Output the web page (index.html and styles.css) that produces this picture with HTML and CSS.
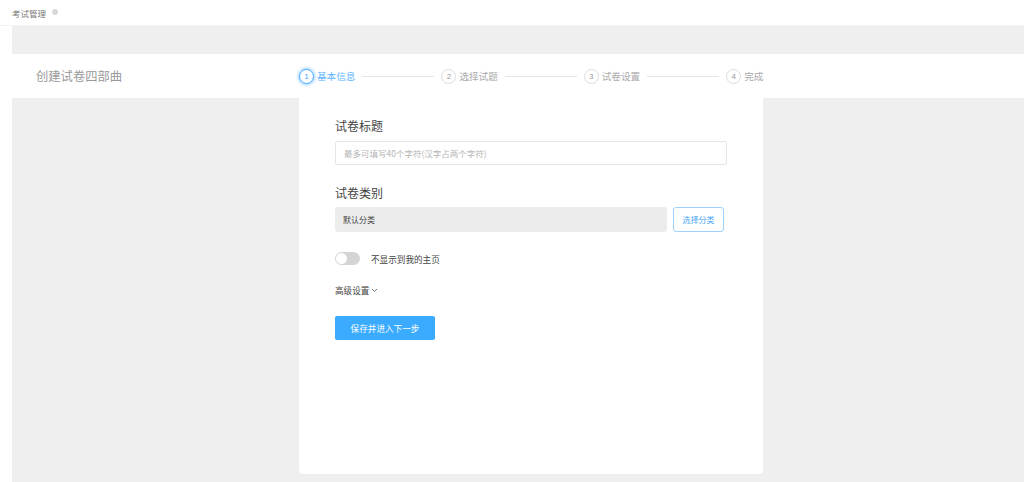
FILE: index.html
```html
<!DOCTYPE html>
<html lang="zh">
<head>
<meta charset="utf-8">
<link rel="stylesheet" href="styles.css">
</head>
<body>
<div class="topbar"><span class="crumb">考试管理</span><span class="dot"></span></div>
<div class="main">
  <div class="band"></div>
  <div class="header">
    <div class="page-title">创建试卷四部曲</div>
    <div class="steps">
      <div class="step active"><span class="num">1</span><span class="label">基本信息</span></div>
      <div class="line"></div>
      <div class="step"><span class="num">2</span><span class="label">选择试题</span></div>
      <div class="line"></div>
      <div class="step"><span class="num">3</span><span class="label">试卷设置</span></div>
      <div class="line"></div>
      <div class="step"><span class="num">4</span><span class="label">完成</span></div>
    </div>
  </div>
  <div class="content">
    <div class="card">
      <div class="field-label">试卷标题</div>
      <div class="input"><span class="placeholder">最多可填写40个字符(汉字占两个字符)</span></div>
      <div class="field-label second">试卷类别</div>
      <div class="cat-row">
        <div class="cat-box">默认分类</div>
        <div class="cat-btn">选择分类</div>
      </div>
      <div class="toggle-row">
        <span class="toggle"><span class="knob"></span></span>
        <span class="toggle-text">不显示到我的主页</span>
      </div>
      <div class="advanced">高级设置<svg class="chev" width="7" height="5" viewBox="0 0 7 5"><path d="M1 1 L3.5 3.5 L6 1" fill="none" stroke="#666" stroke-width="0.9"/></svg></div>
      <div class="submit">保存并进入下一步</div>
    </div>
  </div>
</div>
</body>
</html>
```

FILE: styles.css
```css
html, body {
  margin: 0;
  padding: 0;
  background: #fff;
  font-family: "Noto Sans CJK SC", "Noto Sans", sans-serif;
  height: 482px;
  overflow: hidden;
}
.topbar {
  height: 25px;
  display: flex;
  align-items: center;
  padding-left: 12px;
  border-bottom: 1px solid #f3f3f3;
}
.crumb {
  font-size: 8.5px;
  color: #777;
}
.dot {
  width: 6px;
  height: 6px;
  border-radius: 50%;
  background: #d8d8d8;
  margin-left: 6px;
  margin-top: -2px;
}
.main {
  margin-left: 12px;
  background: #efefef;
  height: 456px;
  display: flex;
  flex-direction: column;
}
.band {
  height: 28px;
}
.header {
  height: 44px;
  background: #fff;
  display: flex;
  align-items: center;
}
.page-title {
  width: 263px;
  padding-left: 24px;
  font-size: 12.3px;
  color: #999;
}
.steps {
  display: flex;
  align-items: center;
}
.step {
  display: flex;
  align-items: center;
}
.num {
  width: 13px;
  height: 13px;
  border: 1px solid #ddd;
  border-radius: 50%;
  display: flex;
  align-items: center;
  justify-content: center;
  font-size: 8px;
  color: #999;
  font-family: "Liberation Sans", sans-serif;
}
.label {
  margin-left: 3px;
  font-size: 9.6px;
  color: #aaa;
}
.step.active .num {
  border-color: #3ea8ff;
  color: #3ea8ff;
  box-shadow: 0 0 3px 1px rgba(64, 170, 255, 0.55);
}
.step.active .label {
  color: #5cb4ff;
}
.line {
  width: 72px;
  height: 1px;
  background: #e6e6e6;
  margin: 0 7px;
}
.content {
  flex: 1;
  padding-left: 287px;
  padding-bottom: 8px;
  display: flex;
}
.card {
  width: 392px;
  background: #fff;
  border-radius: 0 0 4px 4px;
  padding: 20px 36px 0 36px;
}
.field-label {
  font-size: 12px;
  line-height: 16px;
  color: #444;
}
.field-label.second {
  margin-top: 20px;
}
.input {
  margin-top: 7px;
  height: 22px;
  border: 1px solid #e6e6e6;
  border-radius: 2px;
  display: flex;
  align-items: center;
  padding-left: 8px;
}
.placeholder {
  font-size: 8.5px;
  color: #b5b5b5;
}
.cat-row {
  margin-top: 6px;
  display: flex;
  align-items: center;
}
.cat-box {
  width: 324px;
  height: 25px;
  background: #ececec;
  border-radius: 3px;
  display: flex;
  align-items: center;
  padding-left: 8px;
  font-size: 8px;
  color: #444;
}
.cat-btn {
  margin-left: 6px;
  width: 49px;
  height: 23px;
  border: 1px solid #9fd2ff;
  border-radius: 3px;
  display: flex;
  align-items: center;
  justify-content: center;
  font-size: 8px;
  color: #4aa8f5;
}
.toggle-row {
  margin-top: 20px;
  display: flex;
  align-items: center;
}
.toggle {
  width: 25px;
  height: 13px;
  border-radius: 7px;
  background: #d4d4d4;
  display: flex;
  align-items: center;
  padding-left: 1px;
  box-sizing: border-box;
}
.knob {
  width: 11px;
  height: 11px;
  border-radius: 50%;
  background: #fff;
}
.toggle-text {
  margin-left: 11px;
  font-size: 8.6px;
  color: #444;
}
.advanced {
  margin-top: 19px;
  font-size: 8.6px;
  line-height: 12px;
  color: #444;
  display: flex;
  align-items: center;
}
.chev {
  margin-left: 2px;
}
.submit {
  margin-top: 20px;
  width: 100px;
  height: 24px;
  background: #3aabff;
  border-radius: 2px;
  color: #fff;
  font-size: 8.6px;
  display: flex;
  align-items: center;
  justify-content: center;
}
```
